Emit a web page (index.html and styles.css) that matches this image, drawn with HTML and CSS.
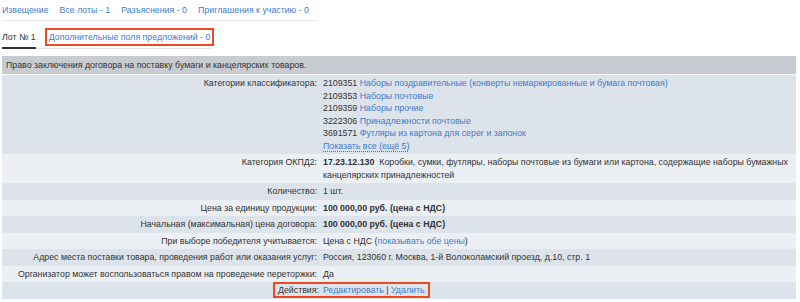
FILE: index.html
```html
<!DOCTYPE html>
<html lang="ru">
<head>
    <meta charset="UTF-8">
    <title>Лот № 1</title>
    <link rel="stylesheet" href="styles.css">
</head>
<body>
    <div class="page">
        <div class="tabs tabs-top">
            <a href="#">Извещение</a>
            <a href="#">Все лоты - 1</a>
            <a href="#">Разъяснения - 0</a>
            <a href="#">Приглашения к участию - 0</a>
        </div>

        <div class="tabs tabs-lot">
            <span class="tab-active">Лот № 1</span>
            <a href="#" class="mark">Дополнительные поля предложений - 0</a>
        </div>

        <table class="lot">
            <thead>
                <tr><th colspan="2">Право заключения договора на поставку бумаги и канцелярских товаров.</th></tr>
            </thead>
            <tbody>
                <tr>
                    <td class="label">Категории классификатора:</td>
                    <td>
                        2109351 <a href="#">Наборы поздравительные (конверты немаркированные и бумага почтовая)</a><br>
                        2109353 <a href="#">Наборы почтовые</a><br>
                        2109359 <a href="#">Наборы прочие</a><br>
                        3222306 <a href="#">Принадлежности почтовые</a><br>
                        3691571 <a href="#">Футляры из картона для серег и запонок</a><br>
                        <a href="#" class="dotted">Показать все (ещё 5)</a>
                    </td>
                </tr>
                <tr>
                    <td class="label">Категория ОКПД2:</td>
                    <td><b>17.23.12.130</b>&nbsp; Коробки, сумки, футляры, наборы почтовые из бумаги или картона, содержащие наборы бумажных канцелярских принадлежностей</td>
                </tr>
                <tr>
                    <td class="label">Количество:</td>
                    <td>1 шт.</td>
                </tr>
                <tr>
                    <td class="label">Цена за единицу продукции:</td>
                    <td><b>100 000,00 руб. (цена с НДС)</b></td>
                </tr>
                <tr>
                    <td class="label">Начальная (максимальная) цена договора:</td>
                    <td><b>100 000,00 руб. (цена с НДС)</b></td>
                </tr>
                <tr>
                    <td class="label">При выборе победителя учитывается:</td>
                    <td>Цена с НДС (<a href="#">показывать обе цены</a>)</td>
                </tr>
                <tr>
                    <td class="label">Адрес места поставки товара, проведения работ или оказания услуг:</td>
                    <td>Россия, 123060 г. Москва, 1-й Волоколамский проезд, д.10, стр. 1</td>
                </tr>
                <tr>
                    <td class="label">Организатор может воспользоваться правом на проведение переторжки:</td>
                    <td>Да</td>
                </tr>
                <tr>
                    <td class="label"><span class="mark mark-left">Действия:</span></td>
                    <td><span class="mark mark-right"><a href="#">Редактировать</a> | <a href="#">Удалить</a></span></td>
                </tr>
            </tbody>
        </table>
    </div>
</body>
</html>
```

FILE: styles.css
```css
body { margin: 0; font-family: "Liberation Sans", Arial, sans-serif; font-size: 8.8px; color: #333; background: #fff; }
.page { padding: 3px 4px 0 2px; }
a { color: #3d7ccc; text-decoration: none; }

.tabs { gap: 11px; border-bottom: 1px solid #e6e6e6; line-height: 12px; white-space: nowrap; }
.tabs-top { display: flex; width: 316px; padding: 1px 0 4px 0; }
.tabs-lot { display: flex; width: 211px; margin-top: 7px; align-items: flex-end; }
.tab-active { padding: 0 0 4px 0; border-bottom: 2px solid #333; margin-bottom: -1px; }

.mark { border: 2px solid #f0491f; }
.tabs-lot .mark { padding: 1px 2px; margin: 0 0 2px -2px; }

.lot { width: 100%; border-collapse: collapse; margin-top: 7px; }
.lot th { background: #c8ccd2; font-weight: normal; text-align: left; padding: 3px 4px; line-height: 12px; border-bottom: 1px solid #fff; }
.lot td { padding: 2px 3px; line-height: 12.5px; vertical-align: top; }
.lot tbody tr:nth-child(odd) { background: #dde3ea; }
.lot tbody tr:nth-child(even) { background: #eceff3; }
.lot td.label { text-align: right; width: 312px; }
.dotted { text-decoration: underline dotted; text-underline-offset: 2px; }

.mark-left { border-right: none; padding: 1px 1px 1px 3px; margin-right: -3px; }
.mark-right { border-left: none; padding: 1px 3px 1px 3px; margin-left: -3px; }
```
